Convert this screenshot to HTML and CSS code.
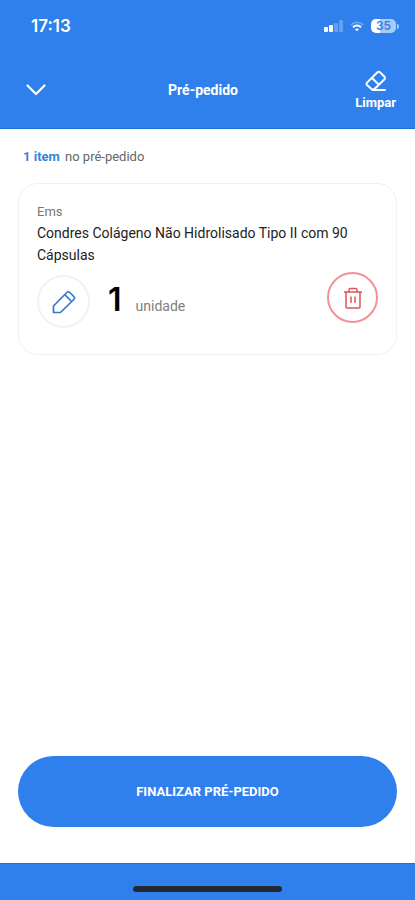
FILE: index.html
```html
<!DOCTYPE html>
<html lang="pt-BR">
<head>
<meta charset="utf-8">
<meta name="viewport" content="width=device-width, initial-scale=1">
<title>Pré-pedido</title>
<link rel="stylesheet" href="styles.css">
</head>
<body>
<div class="app">
  <header class="header">
    <div class="status">
      <span class="time">17:13</span>
      <div class="status-icons">
        <svg class="signal" viewBox="0 0 19 12" fill="#fff" aria-hidden="true">
          <rect x="0" y="7" width="4" height="5" rx="1"/>
          <rect x="5" y="5" width="4" height="7" rx="1"/>
          <rect x="10" y="3" width="4" height="9" rx="1" opacity=".25"/>
          <rect x="15" y="0" width="4" height="12" rx="1" opacity=".25"/>
        </svg>
        <svg class="wifi" viewBox="0 0 16 12" fill="none" stroke="#fff" stroke-width="2" aria-hidden="true">
          <path d="M1 4.300C5 .3 11 .3 15 4.300" opacity=".3"/>
          <path d="M3.500 6.800C6 4.300 10 4.300 12.500 6.800" stroke-width="2.400"/>
          <path d="M5.700 9.200C7 8 9 8 10.300 9.200L8 11.500Z" fill="#fff" stroke="none"/>
        </svg>
        <span class="battery"><span class="battery-body">35</span><span class="battery-tip"></span></span>
      </div>
    </div>
    <div class="navbar">
      <button class="back" type="button" aria-label="Fechar">
        <svg viewBox="0 0 20 12" fill="none" stroke="#fff" stroke-width="2.200" stroke-linecap="round" stroke-linejoin="round"><path d="M1.500 1.500L10 10L18.500 1.500"/></svg>
      </button>
      <h1 class="title">Pré-pedido</h1>
      <button class="clear" type="button">
        <svg viewBox="0 0 22 22" fill="none" stroke="#fff" stroke-width="2" stroke-linecap="round" stroke-linejoin="round"><path d="M7 19.500L2 15Q1 13.800 2 12.600L12.500 2.300Q13.700 1.300 15 2.300L19.500 6.800Q20.500 8 19.500 9.200L10 18.500Q8.500 20 7 19.500ZM7 8L14 14.800M8 20H20"/></svg>
        <span>Limpar</span>
      </button>
    </div>
  </header>
  <main class="content">
    <p class="count"><strong>1 item</strong> no pré-pedido</p>
    <article class="card">
      <p class="brand">Ems</p>
      <h2 class="product">Condres Colágeno Não Hidrolisado Tipo II com 90 Cápsulas</h2>
      <div class="row">
        <button class="round edit" type="button" aria-label="Editar quantidade">
          <svg viewBox="0 0 24 24" fill="none" stroke="#3279d2" stroke-width="1.700" stroke-linejoin="round"><path d="M1.500 22.500V16L14.800 2.500Q16.300 1 17.800 2.500L21.800 6.500Q23.300 8 21.800 9.500L8.500 22.500ZM12.800 4.600L19.600 11.500"/></svg>
        </button>
        <span class="amount">1</span>
        <span class="unit">unidade</span>
        <button class="round remove" type="button" aria-label="Remover item">
          <svg viewBox="0 0 20 22" fill="none" stroke="#d9575b" stroke-width="1.500" stroke-linejoin="round"><path d="M1 5H19M3 5V20Q3 21 4 21H16Q17 21 17 20V5M6 5V3Q6 1.500 7.500 1.500H12.500Q14 1.500 14 3V5M8 9.500V16M12 9.500V16"/></svg>
        </button>
      </div>
    </article>
  </main>
  <div class="action"><button class="finish" type="button">FINALIZAR PRÉ-PEDIDO</button></div>
  <footer class="footer"><span class="home"></span></footer>
</div>
</body>
</html>
```
FILE: styles.css
```css
* { box-sizing: border-box; }
body, h1, h2, p { margin: 0; }
body { background: #fff; font-family: Roboto, "Liberation Sans", sans-serif; color: #222; }
button { padding: 0; border: 0; background: none; color: inherit; font: inherit; cursor: pointer; }
svg { display: block; }
.app { display: flex; flex-direction: column; min-height: 100vh; }

.header { background: #2f80ec; color: #fff; border-bottom: 1px solid #1c70dc; }
.status { display: flex; align-items: center; justify-content: space-between; height: 52px; padding: 0 16px 0 31px; }
.time { font: 600 17px/20px Inter, sans-serif; }
.status-icons { display: flex; align-items: center; gap: 7px; }
.signal { width: 19px; height: 12px; }
.wifi { width: 14px; height: 11px; }
.battery { display: flex; align-items: center; gap: 1px; }
.battery-body { width: 25px; height: 14px; border-radius: 5px; background: linear-gradient(90deg, #fff 35%, #a9cbf7 35%); color: #3b80d8; font: 600 12px/14px Inter, sans-serif; text-align: center; }
.battery-tip { width: 2px; height: 5px; border-radius: 0 2px 2px 0; background: #a9cbf7; }

.navbar { display: grid; grid-template-columns: 1fr auto 1fr; align-items: center; height: 76px; padding: 0 19px 0 26px; }
.back { justify-self: start; }
.back svg { width: 20px; height: 12px; }
.title { margin-right: 16px; font-size: 14px; line-height: 20px; font-weight: 700; }
.clear { display: flex; flex-direction: column; align-items: center; gap: 3px; justify-self: end; font-size: 13px; line-height: 16px; font-weight: 700; }
.clear svg { width: 22px; height: 22px; }

.content { flex: 1; padding: 18px; }
.count { padding: 0 5px; font-size: 13px; line-height: 20px; color: #666; }
.count strong { margin-right: 2px; color: #3684d8; }
.card { margin-top: 16px; padding: 18px; padding-bottom: 26px; border: 1px solid #f0f1f2; border-radius: 20px; }
.brand { font-size: 13px; line-height: 20px; color: #777; }
.product { font-size: 14px; line-height: 22px; font-weight: 400; }
.row { display: flex; align-items: baseline; margin-top: 6px; }
.round { display: grid; place-items: center; flex: none; border-radius: 50%; }
.edit { width: 53px; height: 53px; align-self: flex-end; border: 2px solid #f0f2f5; }
.edit svg { width: 24px; height: 24px; }
.amount { margin-left: 18px; font: 600 32px/56px Inter, sans-serif; color: #000; }
.unit { margin-left: 14px; font-size: 14px; line-height: 20px; color: #808080; }
.remove { width: 51px; height: 51px; align-self: flex-start; margin-left: auto; border: 2px solid #ef9299; }
.remove svg { width: 20px; height: 22px; }

.action { padding: 0 18px 36px; }
.finish { display: block; width: 100%; height: 71px; border-radius: 36px; background: #2f80ec; color: #fff; font-size: 13px; font-weight: 700; }
.footer { display: flex; justify-content: center; align-items: flex-end; height: 37px; padding-bottom: 8px; background: #2f80ec; border-top: 1px solid #1c70dc; }
.home { width: 36%; height: 6px; border-radius: 3px; background: #222a2f; }
```
